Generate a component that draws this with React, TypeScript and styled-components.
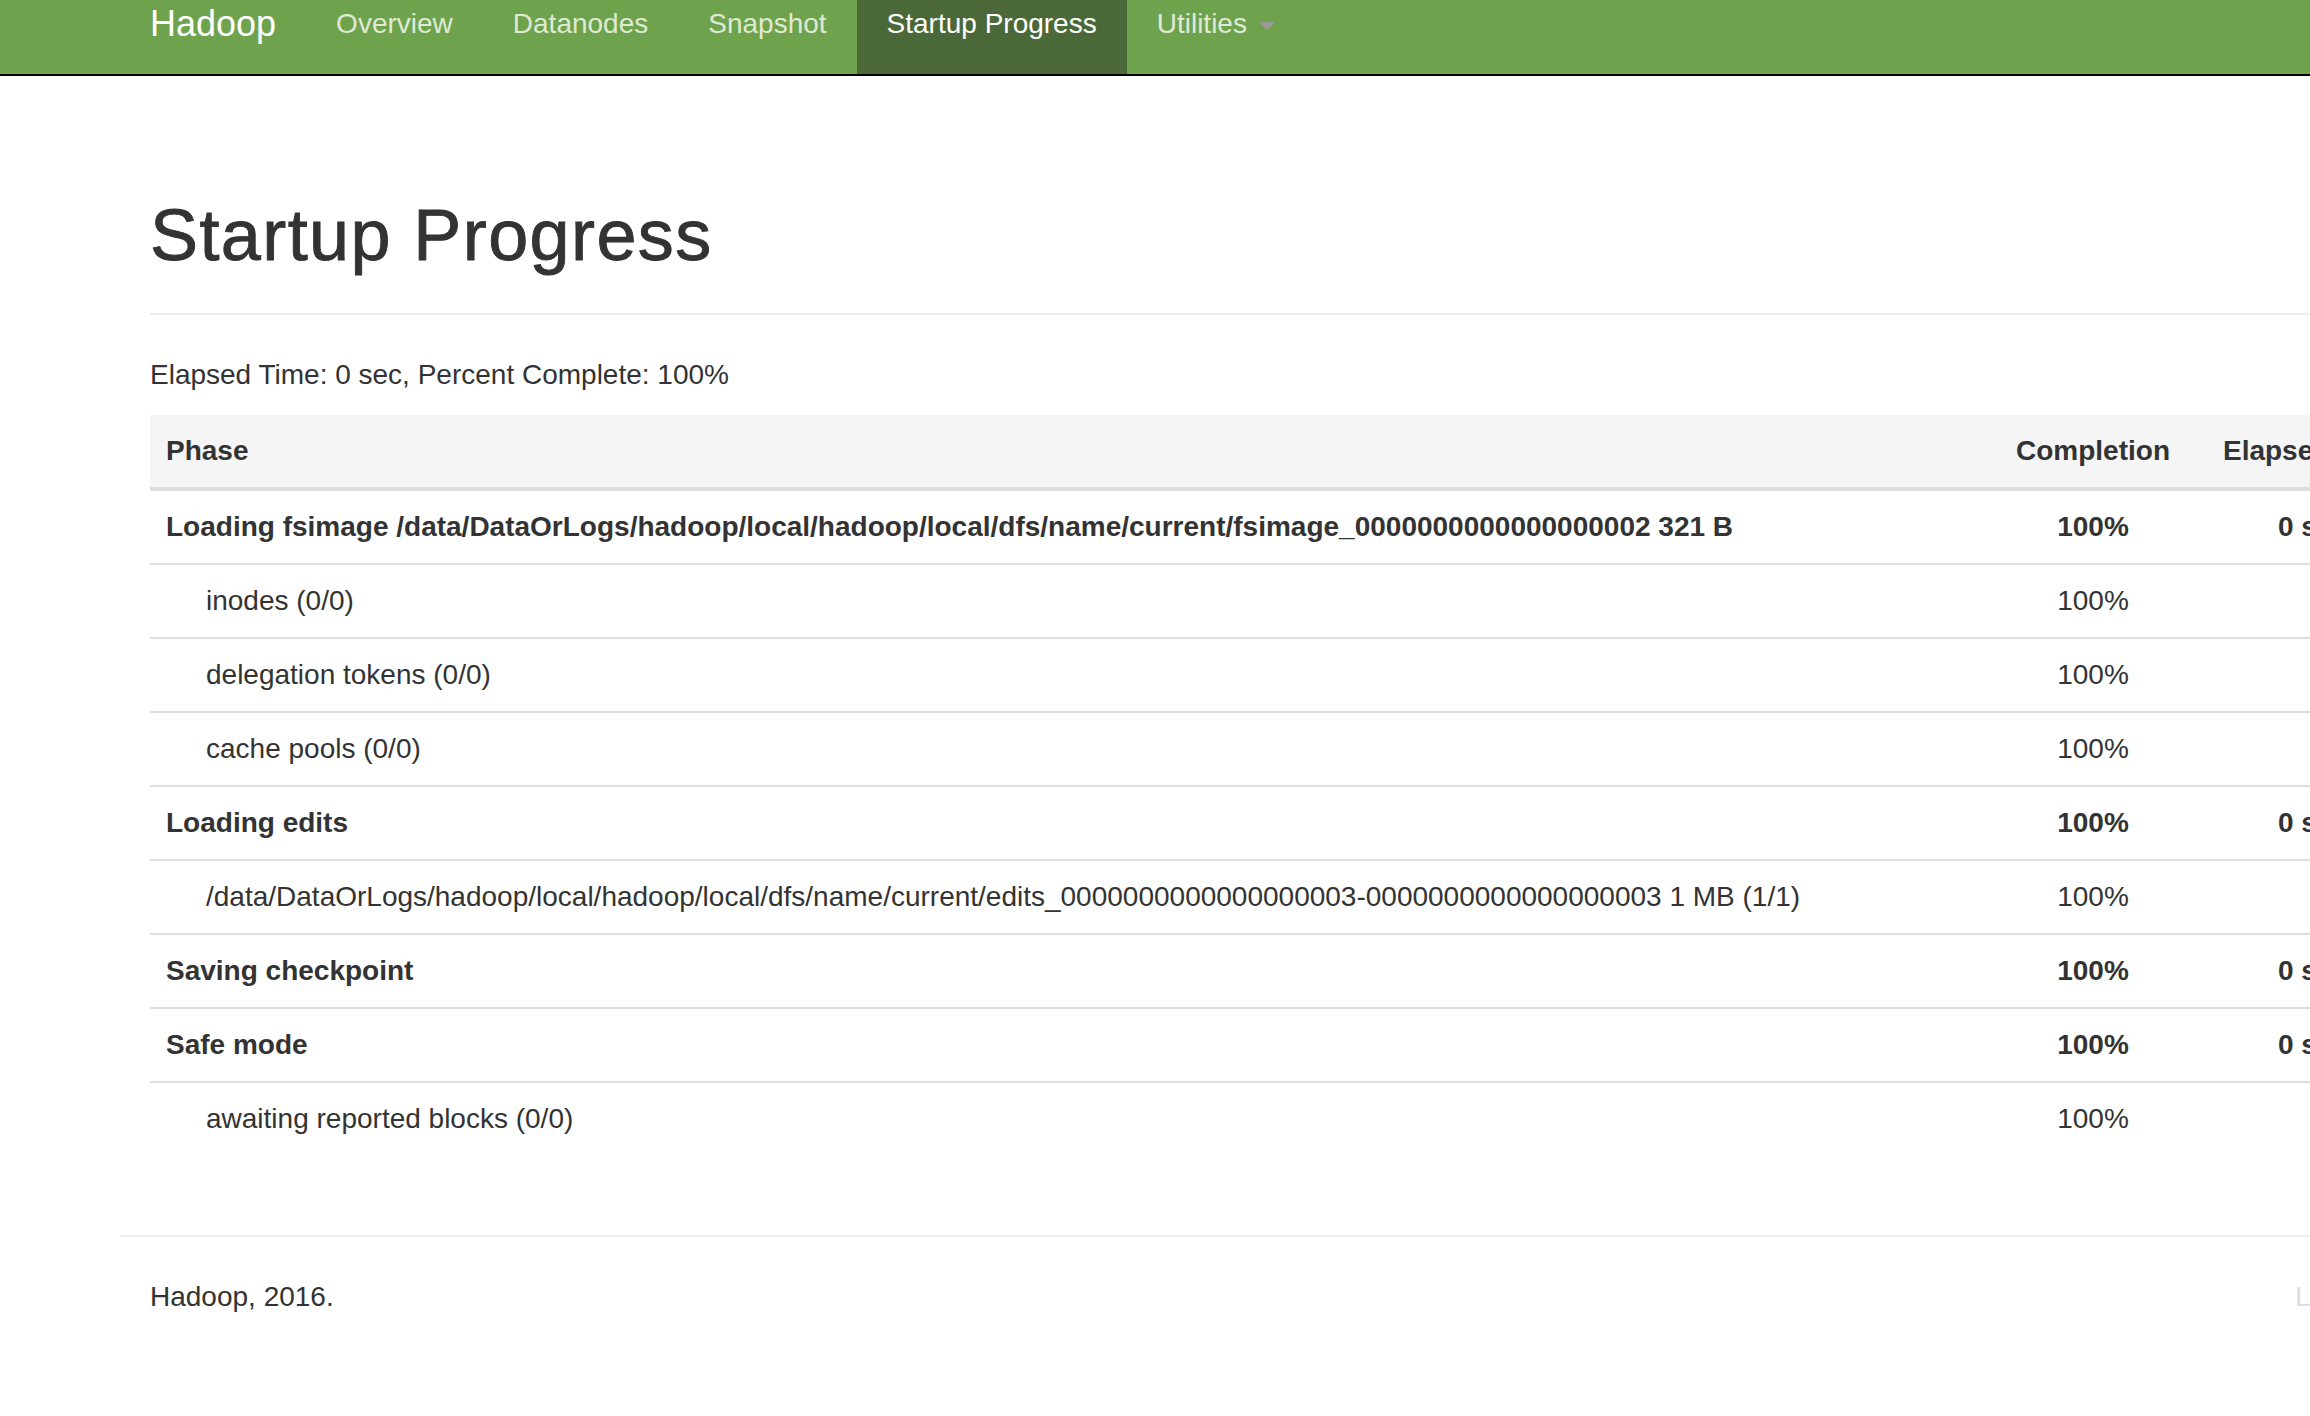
import React from "react";
import styled, { createGlobalStyle } from "styled-components";

const GlobalStyle = createGlobalStyle`
  html, body {
    margin: 0;
    padding: 0;
    background: #ffffff;
    overflow-x: hidden;
  }
  body {
    font-family: "Liberation Sans", Arial, Helvetica, sans-serif;
    font-size: 28px;
    line-height: 40px;
    color: #333333;
  }
  * { box-sizing: border-box; }
`;

const Navbar = styled.header`
  display: flex;
  height: 76px;
  background: #6fa24d;
  border-bottom: 2px solid #000000;
  width: 2460px;
`;

const NavInner = styled.div`
  display: flex;
  align-items: stretch;
  margin-left: 120px;
`;

const Brand = styled.a`
  display: block;
  padding: 4px 30px 0;
  font-size: 36px;
  line-height: 40px;
  color: #ffffff;
  text-decoration: none;
`;

const NavList = styled.ul`
  display: flex;
  list-style: none;
  margin: 0;
  padding: 0;
`;

const NavItem = styled.li<{ $active?: boolean }>`
  background: ${(p) => (p.$active ? "#4b6839" : "transparent")};
`;

const NavLink = styled.a<{ $active?: boolean }>`
  display: block;
  height: 74px;
  padding: 4px 30px 0;
  font-size: 28px;
  line-height: 40px;
  color: ${(p) => (p.$active ? "#ffffff" : "#dfead5")};
  text-decoration: none;
  white-space: nowrap;
`;

const Caret = styled.span`
  display: inline-block;
  width: 0;
  height: 0;
  margin-left: 4px;
  vertical-align: middle;
  border-top: 8px solid #9a9a9a;
  border-left: 8px solid transparent;
  border-right: 8px solid transparent;
`;

const Container = styled.main`
  margin-left: 120px;
  width: 2340px;
  padding: 0 30px;
`;

const PageHeader = styled.div`
  margin: 120px 0 40px;
  padding-bottom: 18px;
  border-bottom: 2px solid #eeeeee;
`;

const Title = styled.h1`
  margin: 0 0 20px;
  font-size: 72px;
  line-height: 79px;
  font-weight: 400;
  letter-spacing: 1.4px;
  -webkit-text-stroke: 0.9px #333333;
  color: #333333;
`;

const Summary = styled.p`
  margin: 0 0 20px;
`;

const Table = styled.table`
  width: 100%;
  table-layout: fixed;
  border-collapse: collapse;
  border-spacing: 0;
  margin-bottom: 40px;
`;

const HeadRow = styled.tr`
  background: #f5f5f5;
`;

const Th = styled.th<{ $center?: boolean }>`
  padding: 16px;
  line-height: 40px;
  font-weight: 700;
  text-align: ${(p) => (p.$center ? "center" : "left")};
  border-bottom: 4px solid #dddddd;
  white-space: nowrap;
  overflow: visible;
`;

const Td = styled.td<{ $bold?: boolean; $center?: boolean; $indent?: boolean }>`
  padding: 16px;
  padding-left: ${(p) => (p.$indent ? "56px" : "16px")};
  line-height: 40px;
  border-top: 2px solid #dddddd;
  font-weight: ${(p) => (p.$bold ? 700 : 400)};
  text-align: ${(p) => (p.$center ? "center" : "left")};
  white-space: nowrap;
  overflow: visible;
`;

const FooterRow = styled.footer`
  display: flow-root;
  margin-left: -30px;
  width: 2340px;
`;

const Rule = styled.hr`
  margin: 40px 0;
  border: 0;
  border-top: 2px solid #eeeeee;
  height: 0;
`;

const FooterCols = styled.div`
  display: flex;
  justify-content: space-between;
`;

const FooterCol = styled.div<{ $width: number }>`
  width: ${(p) => p.$width}px;
  padding: 0 30px;
`;

const FooterText = styled.p`
  margin: 0 0 20px;
  white-space: nowrap;
`;

const LegacyLink = styled.a`
  color: #dddddd;
  text-decoration: none;
  white-space: nowrap;
`;

type Row = {
  kind: "phase" | "step";
  desc: string;
  completion: string;
  elapsed?: string;
};

const rows: Row[] = [
  {
    kind: "phase",
    desc: "Loading fsimage /data/DataOrLogs/hadoop/local/hadoop/local/dfs/name/current/fsimage_0000000000000000002 321 B",
    completion: "100%",
    elapsed: "0 sec",
  },
  { kind: "step", desc: "inodes (0/0)", completion: "100%" },
  { kind: "step", desc: "delegation tokens (0/0)", completion: "100%" },
  { kind: "step", desc: "cache pools (0/0)", completion: "100%" },
  { kind: "phase", desc: "Loading edits", completion: "100%", elapsed: "0 sec" },
  {
    kind: "step",
    desc: "/data/DataOrLogs/hadoop/local/hadoop/local/dfs/name/current/edits_0000000000000000003-0000000000000000003 1 MB (1/1)",
    completion: "100%",
  },
  { kind: "phase", desc: "Saving checkpoint", completion: "100%", elapsed: "0 sec" },
  { kind: "phase", desc: "Safe mode", completion: "100%", elapsed: "0 sec" },
  { kind: "step", desc: "awaiting reported blocks (0/0)", completion: "100%" },
];

const navItems = ["Overview", "Datanodes", "Snapshot", "Startup Progress"];

export default function App() {
  return (
    <>
      <GlobalStyle />
      <Navbar>
        <NavInner>
          <Brand href="#">Hadoop</Brand>
          <NavList>
            {navItems.map((item) => {
              const active = item === "Startup Progress";
              return (
                <NavItem key={item} $active={active}>
                  <NavLink href="#" $active={active}>
                    {item}
                  </NavLink>
                </NavItem>
              );
            })}
            <NavItem>
              <NavLink href="#">
                Utilities <Caret />
              </NavLink>
            </NavItem>
          </NavList>
        </NavInner>
      </Navbar>
      <Container>
        <PageHeader>
          <Title>Startup Progress</Title>
        </PageHeader>
        <Summary>Elapsed Time: 0 sec, Percent Complete: 100%</Summary>
        <Table>
          <colgroup>
            <col style={{ width: "1840px" }} />
            <col style={{ width: "206px" }} />
            <col style={{ width: "234px" }} />
          </colgroup>
          <thead>
            <HeadRow>
              <Th>Phase</Th>
              <Th $center>Completion</Th>
              <Th $center>Elapsed Time</Th>
            </HeadRow>
          </thead>
          <tbody>
            {rows.map((r, i) => {
              const phase = r.kind === "phase";
              return (
                <tr key={i}>
                  <Td $bold={phase} $indent={!phase}>
                    {r.desc}
                  </Td>
                  <Td $bold={phase} $center>
                    {r.completion}
                  </Td>
                  <Td $bold={phase} $center>
                    {r.elapsed ?? ""}
                  </Td>
                </tr>
              );
            })}
          </tbody>
        </Table>
        <FooterRow>
          <Rule />
          <FooterCols>
            <FooterCol $width={390}>
              <FooterText>Hadoop, 2016.</FooterText>
            </FooterCol>
            <FooterCol $width={195}>
              <LegacyLink href="#">Legacy UI</LegacyLink>
            </FooterCol>
          </FooterCols>
        </FooterRow>
      </Container>
    </>
  );
}
